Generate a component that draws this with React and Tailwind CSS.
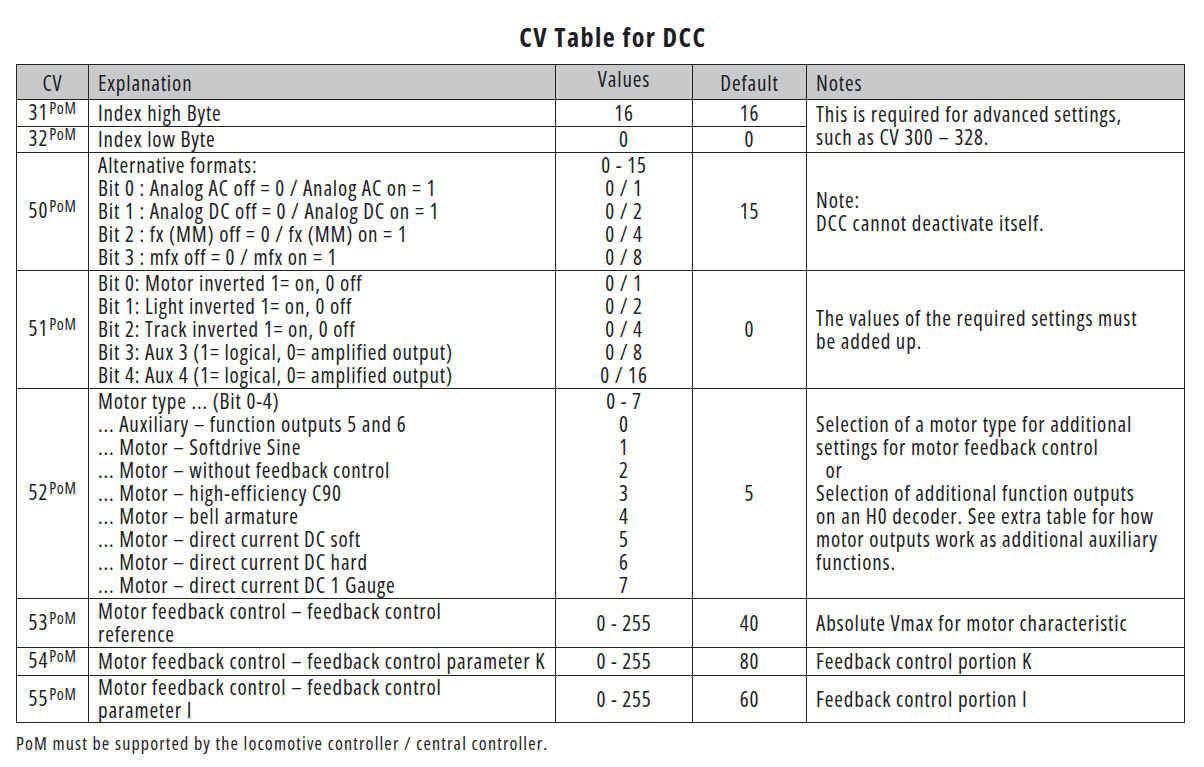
const font = { fontFamily: '"Open Sans", "DejaVu Sans Condensed", sans-serif', fontStretch: "75%" };

const Cv = ({ n }) => (
  <span className="whitespace-nowrap">
    {n}
    <span className="relative -top-[6px] ml-[1px] text-[16px] tracking-[0.6px]">PoM</span>
  </span>
);

const Lines = ({ items }) => (
  <>
    {items.map((t, i) => (
      <div key={i} className="whitespace-pre">
        {t}
      </div>
    ))}
  </>
);

const td = "border border-[#222] align-middle";

export default function App() {
  return (
    <div className="w-[1204px] h-[767px] bg-white text-[#1c1c24]" style={font}>
      <div className="pl-[22px] pt-[21px] text-center text-[26px] font-bold leading-[32px] tracking-[1.5px]">
        CV Table for DCC
      </div>

      <table className="ml-[16px] mt-[11px] w-[1168px] table-fixed border-collapse text-[21px] leading-[23px] tracking-[0.85px]">
        <colgroup>
          <col className="w-[72px]" />
          <col className="w-[467px]" />
          <col className="w-[137px]" />
          <col className="w-[114px]" />
          <col className="w-[378px]" />
        </colgroup>
        <thead>
          <tr className="h-[35px] bg-[#c8c9cb]">
            <th className={`${td} pt-[2px] text-center font-normal`}>CV</th>
            <th className={`${td} pl-[9px] pt-[2px] text-left font-normal`}>Explanation</th>
            <th className={`${td} pb-[6px] text-center font-normal`}>Values</th>
            <th className={`${td} pt-[2px] text-center font-normal`}>Default</th>
            <th className={`${td} pl-[9px] pt-[2px] text-left font-normal`}>Notes</th>
          </tr>
        </thead>
        <tbody>
          <tr className="h-[27px]">
            <td className={`${td} text-center`}><Cv n="31" /></td>
            <td className={`${td} pl-[9px]`}>Index high Byte</td>
            <td className={`${td} text-center`}>16</td>
            <td className={`${td} text-center`}>16</td>
            <td rowSpan={2} className={`${td} pl-[9px]`}>
              <Lines items={["This is required for advanced settings,", "such as CV 300 – 328."]} />
            </td>
          </tr>
          <tr className="h-[26px]">
            <td className={`${td} text-center`}><Cv n="32" /></td>
            <td className={`${td} pl-[9px]`}>Index low Byte</td>
            <td className={`${td} text-center`}>0</td>
            <td className={`${td} text-center`}>0</td>
          </tr>
          <tr className="h-[118px]">
            <td className={`${td} text-center`}><Cv n="50" /></td>
            <td className={`${td} pl-[9px]`}>
              <Lines
                items={[
                  "Alternative formats:",
                  "Bit 0 : Analog AC off = 0 / Analog AC on = 1",
                  "Bit 1 : Analog DC off = 0 / Analog DC on = 1",
                  "Bit 2 : fx (MM) off = 0 / fx (MM) on = 1",
                  "Bit 3 : mfx off = 0 / mfx on = 1",
                ]}
              />
            </td>
            <td className={`${td} text-center`}>
              <Lines items={["0 - 15", "0 / 1", "0 / 2", "0 / 4", "0 / 8"]} />
            </td>
            <td className={`${td} text-center`}>15</td>
            <td className={`${td} pl-[9px]`}>
              <Lines items={["Note:", "DCC cannot deactivate itself."]} />
            </td>
          </tr>
          <tr className="h-[118px]">
            <td className={`${td} text-center`}><Cv n="51" /></td>
            <td className={`${td} pl-[9px]`}>
              <Lines
                items={[
                  "Bit 0: Motor inverted 1= on, 0 off",
                  "Bit 1: Light inverted 1= on, 0 off",
                  "Bit 2: Track inverted 1= on, 0 off",
                  "Bit 3: Aux 3 (1= logical, 0= amplified output)",
                  "Bit 4: Aux 4 (1= logical, 0= amplified output)",
                ]}
              />
            </td>
            <td className={`${td} text-center`}>
              <Lines items={["0 / 1", "0 / 2", "0 / 4", "0 / 8", "0 / 16"]} />
            </td>
            <td className={`${td} text-center`}>0</td>
            <td className={`${td} pl-[9px]`}>
              <Lines items={["The values of the required settings must", "be added up."]} />
            </td>
          </tr>
          <tr className="h-[210px]">
            <td className={`${td} text-center`}><Cv n="52" /></td>
            <td className={`${td} pl-[9px]`}>
              <Lines
                items={[
                  "Motor type ... (Bit 0-4)",
                  "... Auxiliary – function outputs 5 and 6",
                  "... Motor – Softdrive Sine",
                  "... Motor – without feedback control",
                  "... Motor – high-efficiency C90",
                  "... Motor – bell armature",
                  "... Motor – direct current DC soft",
                  "... Motor – direct current DC hard",
                  "... Motor – direct current DC 1 Gauge",
                ]}
              />
            </td>
            <td className={`${td} text-center`}>
              <Lines items={["0 - 7", "0", "1", "2", "3", "4", "5", "6", "7"]} />
            </td>
            <td className={`${td} text-center`}>5</td>
            <td className={`${td} pl-[9px]`}>
              <Lines
                items={[
                  "Selection of a motor type for additional",
                  "settings for motor feedback control",
                  "  or",
                  "Selection of additional function outputs",
                  "on an H0 decoder. See extra table for how",
                  "motor outputs work as additional auxiliary",
                  "functions.",
                ]}
              />
            </td>
          </tr>
          <tr className="h-[49px]">
            <td className={`${td} text-center`}><Cv n="53" /></td>
            <td className={`${td} pl-[9px]`}>
              <Lines items={["Motor feedback control – feedback control", "reference"]} />
            </td>
            <td className={`${td} text-center`}>0 - 255</td>
            <td className={`${td} text-center`}>40</td>
            <td className={`${td} pl-[9px]`}>Absolute Vmax for motor characteristic</td>
          </tr>
          <tr className="h-[28px]">
            <td className={`${td} text-center`}><Cv n="54" /></td>
            <td className={`${td} pl-[9px] whitespace-nowrap`}>Motor feedback control – feedback control parameter K</td>
            <td className={`${td} text-center`}>0 - 255</td>
            <td className={`${td} text-center`}>80</td>
            <td className={`${td} pl-[9px]`}>Feedback control portion K</td>
          </tr>
          <tr className="h-[47px]">
            <td className={`${td} text-center`}><Cv n="55" /></td>
            <td className={`${td} pl-[9px]`}>
              <Lines items={["Motor feedback control – feedback control", "parameter I"]} />
            </td>
            <td className={`${td} text-center`}>0 - 255</td>
            <td className={`${td} text-center`}>60</td>
            <td className={`${td} pl-[9px]`}>Feedback control portion I</td>
          </tr>
        </tbody>
      </table>

      <div className="ml-[16px] mt-[10px] text-[18px] leading-[20px] tracking-[1.15px]">
        PoM must be supported by the locomotive controller / central controller.
      </div>
    </div>
  );
}
